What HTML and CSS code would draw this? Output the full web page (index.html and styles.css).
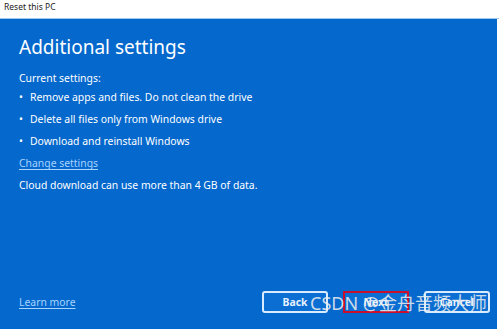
FILE: index.html
```html
<!DOCTYPE html>
<html lang="en">
<head>
    <meta charset="UTF-8">
    <meta name="viewport" content="width=device-width, initial-scale=1.0">
    <title>Reset this PC</title>
    <link rel="stylesheet" href="styles.css">
</head>
<body>
    <div class="titlebar">Reset this PC</div>

    <div class="dialog">
        <h1>Additional settings</h1>

        <div class="label">Current settings:</div>
        <ul class="settings">
            <li>Remove apps and files. Do not clean the drive</li>
            <li>Delete all files only from Windows drive</li>
            <li>Download and reinstall Windows</li>
        </ul>
        <a class="link change" href="#">Change settings</a>
        <div class="note">Cloud download can use more than 4 GB of data.</div>

        <div class="footer">
            <a class="link" href="#">Learn more</a>
            <div class="buttons">
                <button>Back</button>
                <button class="marked">Next</button>
                <button>Cancel</button>
            </div>
        </div>
    </div>

    <div class="watermark">CSDN @金舟音频大师</div>
</body>
</html>
```

FILE: styles.css
```css
body {
    margin: 0;
    width: 499px;
    height: 329px;
    background-color: #fff;
    font-family: "Noto Sans", "Open Sans", sans-serif;
    position: relative;
    overflow: hidden;
}
.titlebar {
    height: 19px;
    line-height: 14px;
    padding-left: 4px;
    font-size: 8.5px;
    color: #222;
    border-bottom: 1px solid #9cc8f0;
    box-sizing: border-box;
}
.dialog {
    margin-right: 2px;
    height: 310px;
    box-sizing: border-box;
    padding: 0 7px 0 19px;
    background-color: #0468cd;
    color: #fff;
    display: flex;
    flex-direction: column;
}
h1 {
    margin: 15px 0 0;
    font-size: 19px;
    font-weight: normal;
    line-height: 26px;
}
.label {
    margin-top: 10px;
    font-size: 10.4px;
    line-height: 16px;
}
.settings {
    list-style: none;
    margin: 0;
    padding: 0;
}
.settings li {
    font-size: 10.4px;
    line-height: 22px;
}
.settings li::before {
    content: "\2022";
    display: inline-block;
    width: 11px;
}
.link {
    color: #a8d4ff;
    font-size: 10.4px;
    text-decoration: underline;
    text-underline-offset: 2px;
}
.change {
    margin-top: 3px;
    line-height: 16px;
}
.note {
    margin-top: 6px;
    font-size: 10.4px;
    line-height: 16px;
}
.footer {
    margin-top: auto;
    margin-bottom: 16px;
    display: flex;
    align-items: center;
    justify-content: space-between;
}
.buttons {
    display: flex;
    gap: 15px;
}
button {
    width: 66px;
    height: 22px;
    padding: 0;
    border: 2px solid #d8ebff;
    border-radius: 3px;
    background-color: #0a6ed2;
    color: #e8f3ff;
    font-family: "Noto Sans", "Open Sans", sans-serif;
    font-size: 10.4px;
    font-weight: bold;
}
button.marked {
    border-color: #c8102e;
    border-radius: 0;
}
.watermark {
    position: absolute;
    left: 310px;
    top: 291px;
    font-size: 18px;
    line-height: 24px;
    color: rgba(240, 240, 240, 0.85);
    font-family: "Noto Sans", "Noto Sans CJK SC", sans-serif;
}
```
